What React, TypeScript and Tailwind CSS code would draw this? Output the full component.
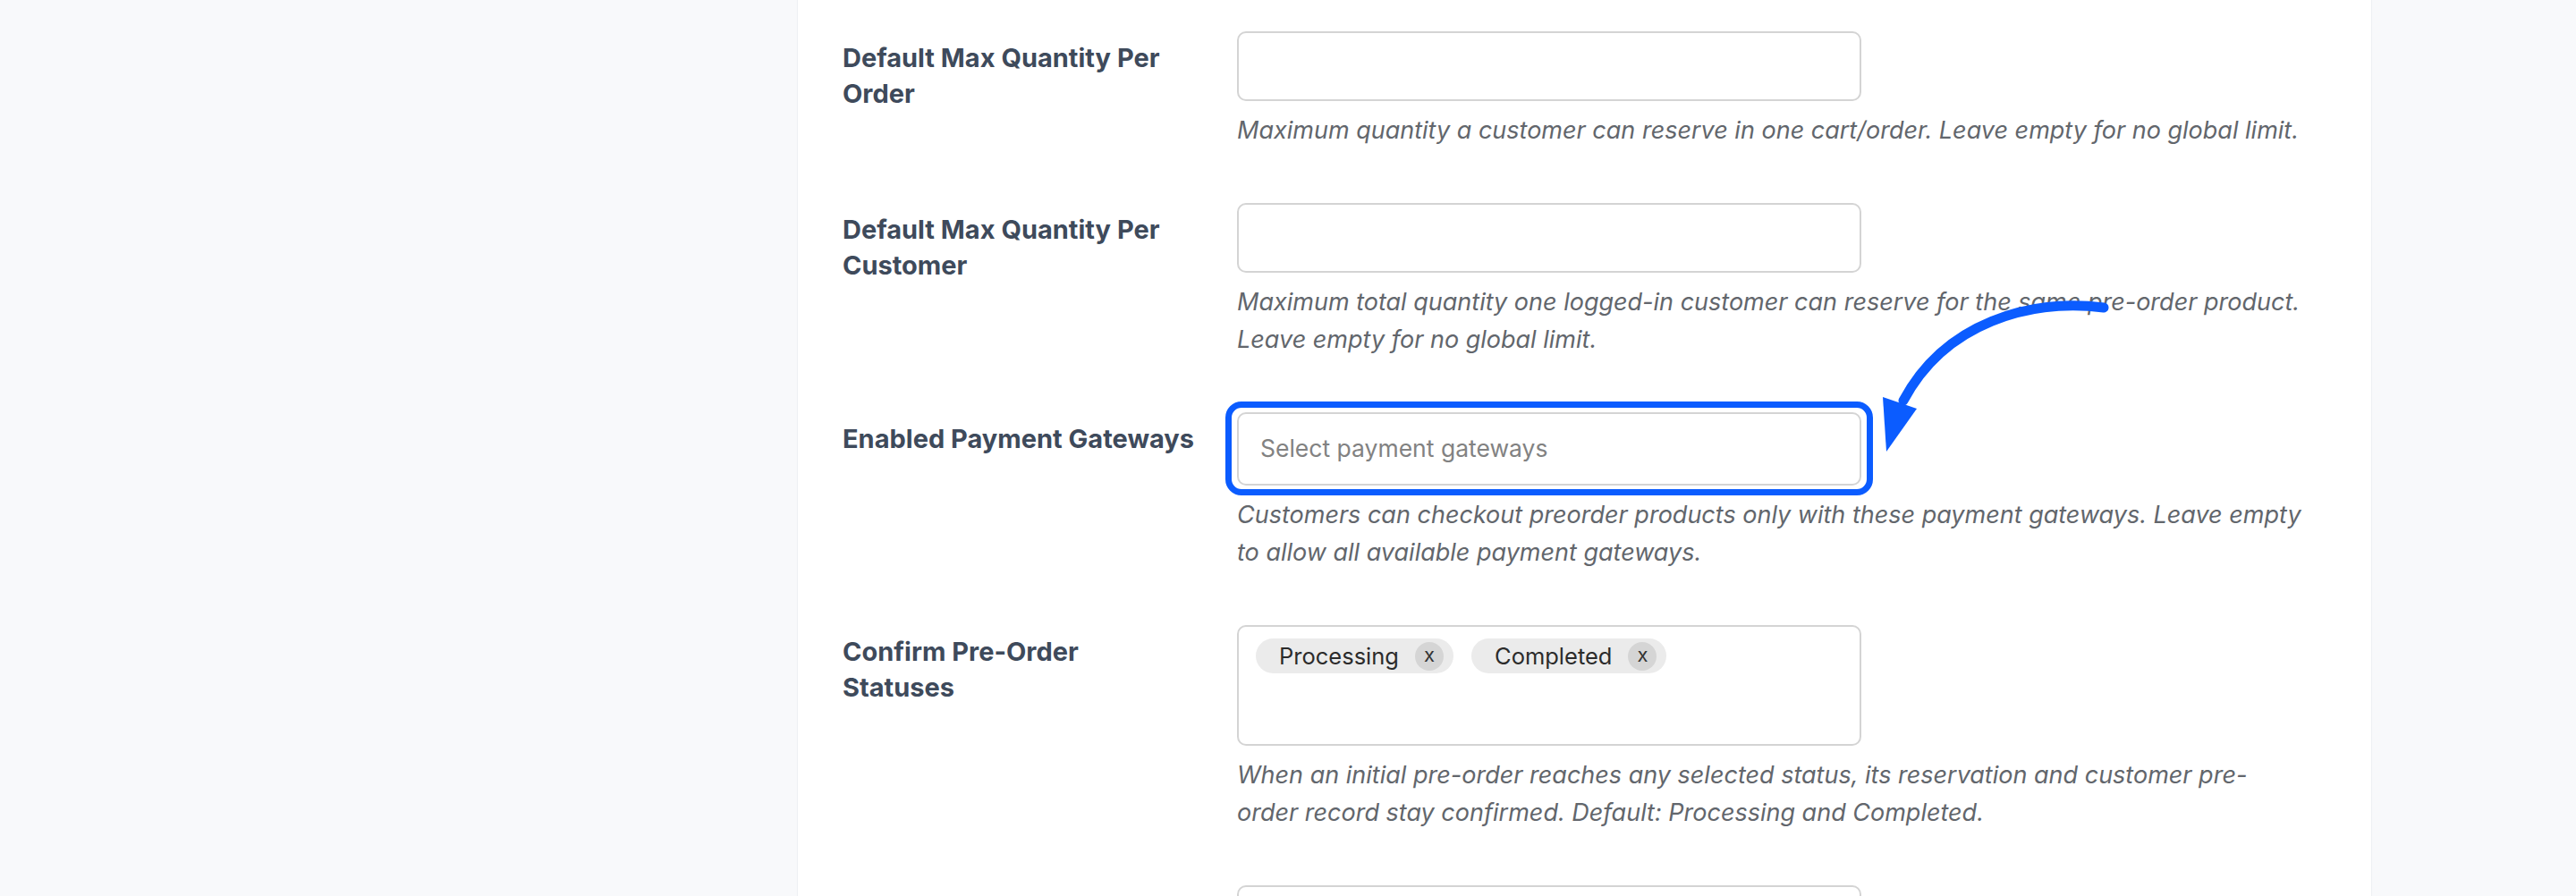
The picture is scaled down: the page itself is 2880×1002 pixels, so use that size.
import React from "react";

const labelCls =
  "w-[441px] shrink-0 pt-[10px] text-[29px] leading-[40px] font-bold text-[#3e4a5b] whitespace-nowrap";
const descCls =
  "mt-[12px] text-[27px] leading-[42px] italic text-[#62666c] whitespace-nowrap";
const inputCls =
  "w-[698px] h-[78px] border-2 border-[#d4d4d4] rounded-[10px] bg-white";

function Chip({ text }: { text: string }) {
  return (
    <div className="h-[39px] rounded-full bg-[#ebebeb] pl-[26px] pr-[11px] flex items-center gap-[18px]">
      <span className="text-[25.5px] leading-none text-[#2b2b2b]">{text}</span>
      <span className="w-[32px] h-[32px] rounded-full bg-[#d5d5d5] flex items-center justify-center text-[22px] leading-none text-[#333] pb-[3px]">
        x
      </span>
    </div>
  );
}

export default function App() {
  return (
    <div
      className="relative w-[2880px] h-[1002px] overflow-hidden bg-[#f8f9fb] flex"
      style={{ fontFamily: "Inter, 'Noto Sans', 'Liberation Sans', sans-serif" }}
    >
      <div className="w-[891px] shrink-0" />
      <div className="w-[1761px] shrink-0 bg-white border-x border-[#eef0f3] pl-[50px] pt-[5px]">
        {/* Row 1 */}
        <div className="flex py-[30px]">
          <div className={labelCls}>
            Default Max Quantity Per
            <br />
            Order
          </div>
          <div>
            <div className={inputCls} />
            <div className={descCls}>
              Maximum quantity a customer can reserve in one cart/order. Leave empty for no global limit.
            </div>
          </div>
        </div>
        {/* Row 2 */}
        <div className="flex py-[30px]">
          <div className={labelCls}>
            Default Max Quantity Per
            <br />
            Customer
          </div>
          <div>
            <div className={inputCls} />
            <div className={descCls}>
              Maximum total quantity one logged-in customer can reserve for the same pre-order product.
              <br />
              Leave empty for no global limit.
            </div>
          </div>
        </div>
        {/* Row 3 */}
        <div className="flex py-[30px]">
          <div className={labelCls}>Enabled Payment Gateways</div>
          <div>
            <div className="relative w-[698px]">
              <div className="w-[698px] h-[82px] border-2 border-[#d4d4d4] rounded-[10px] bg-white flex items-center pl-[24px]">
                <span className="text-[26.5px] text-[#828282]">Select payment gateways</span>
              </div>
              <div className="absolute left-[-13px] right-[-13px] top-[-12px] bottom-[-11px] border-[7px] border-[#0b5cff] rounded-[18px] pointer-events-none" />
            </div>
            <div className={descCls}>
              Customers can checkout preorder products only with these payment gateways. Leave empty
              <br />
              to allow all available payment gateways.
            </div>
          </div>
        </div>
        {/* Row 4 */}
        <div className="flex py-[30px]">
          <div className={labelCls}>
            Confirm Pre-Order
            <br />
            Statuses
          </div>
          <div>
            <div className="w-[698px] h-[135px] border-2 border-[#d4d4d4] rounded-[10px] bg-white px-[19px] pt-[13px] flex items-start gap-[20px]">
              <Chip text="Processing" />
              <Chip text="Completed" />
            </div>
            <div className={descCls}>
              When an initial pre-order reaches any selected status, its reservation and customer pre-
              <br />
              order record stay confirmed. Default: Processing and Completed.
            </div>
          </div>
        </div>
        {/* Row 5 */}
        <div className="flex py-[30px]">
          <div className={labelCls}></div>
          <div>
            <div className={inputCls} />
          </div>
        </div>
      </div>
      <div className="flex-1" />

      {/* Annotation arrow */}
      <svg
        className="absolute left-0 top-0 pointer-events-none"
        width="2880"
        height="1002"
        viewBox="0 0 2880 1002"
      >
        <path
          d="M2352 344 C2270 334 2175 360 2128 448"
          fill="none"
          stroke="#0b5cff"
          strokeWidth="11"
          strokeLinecap="round"
        />
        <polygon points="2105,444 2143,457 2109,505" fill="#0b5cff" />
      </svg>
    </div>
  );
}
